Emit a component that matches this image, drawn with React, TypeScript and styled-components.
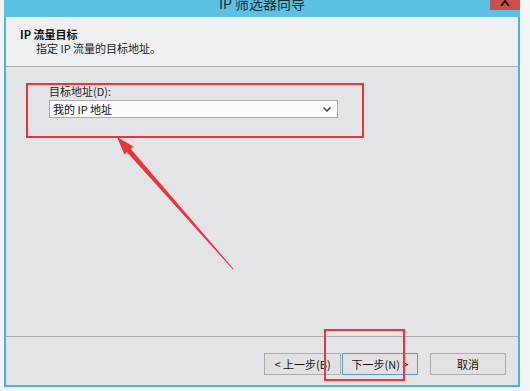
import styled, { createGlobalStyle } from 'styled-components';

const GlobalStyle = createGlobalStyle`
  html, body {
    margin: 0;
    padding: 0;
    background: #f3f4f6;
    font-family: "Noto Sans CJK SC", "Noto Sans", sans-serif;
  }
`;

const Page = styled.div`
  position: relative;
  width: 530px;
  height: 391px;
  overflow: hidden;
  background: #f3f4f6;
`;

const Window = styled.div`
  margin-left: 4px;
  width: 512px;
  height: 385px;
  display: flex;
  flex-direction: column;
  border: 2px solid #48b4e2;
  border-top: none;
  background: #e2e4e7;
`;

const TitleBar = styled.div`
  position: relative;
  height: 17px;
  background: #5bc0e4;
  margin: 0 -2px;
  display: flex;
  justify-content: center;
  align-items: flex-start;
  flex-shrink: 0;
`;

const Title = styled.div`
  font-size: 14px;
  line-height: 14px;
  margin-top: -4px;
  color: #1c2a33;
`;

const CloseButton = styled.div`
  position: absolute;
  right: 0;
  top: 0;
  width: 30px;
  height: 10px;
  background: #c7504a;
  display: flex;
  justify-content: center;
  align-items: flex-start;
`;

const Header = styled.div`
  height: 50px;
  flex-shrink: 0;
  background: #eff0f2;
  border-bottom: 1px solid #a9abae;
  padding: 10px 0 0 14px;
  box-sizing: border-box;
`;

const HeaderTitle = styled.div`
  font-size: 11px;
  line-height: 14px;
  font-weight: bold;
  color: #111;
`;

const HeaderText = styled.div`
  font-size: 11px;
  line-height: 14px;
  color: #222;
  margin: 0 0 0 16px;
`;

const Body = styled.div`
  flex: 1;
  border-bottom: 1px solid #a9abae;
  padding: 17px 0 0 43px;
`;

const FieldLabel = styled.div`
  font-size: 11px;
  line-height: 14px;
  color: #222;
  margin-bottom: 2px;
`;

const Combo = styled.div`
  width: 289px;
  height: 18px;
  box-sizing: border-box;
  background: #fbfbfb;
  border: 1px solid #acacac;
  display: flex;
  align-items: center;
  justify-content: space-between;
  padding: 0 6px 0 3px;
  font-size: 11px;
  color: #111;
`;

const Footer = styled.div`
  height: 48px;
  flex-shrink: 0;
  display: flex;
  justify-content: flex-end;
  align-items: flex-start;
  padding: 16px 12px 0 0;
  box-sizing: border-box;
`;

const Button = styled.div<{ $primary?: boolean; $gap?: number }>`
  width: 77px;
  height: 22px;
  box-sizing: border-box;
  margin-left: ${(p) => p.$gap ?? 0}px;
  background: #e1e1e1;
  border: 1px solid ${(p) => (p.$primary ? '#5a9bcf' : '#adadad')};
  display: flex;
  align-items: center;
  justify-content: center;
  font-size: 11px;
  color: #111;
`;

const RedBox = styled.div<{ $x: number; $y: number; $w: number; $h: number }>`
  position: absolute;
  left: ${(p) => p.$x}px;
  top: ${(p) => p.$y}px;
  width: ${(p) => p.$w}px;
  height: ${(p) => p.$h}px;
  box-sizing: border-box;
  border: 2px solid #ec3338;
`;

const Overlay = styled.svg`
  position: absolute;
  left: 0;
  top: 0;
  pointer-events: none;
`;

export default function App() {
  return (
    <>
      <GlobalStyle />
      <Page>
        <Window>
          <TitleBar>
            <Title>IP 筛选器向导</Title>
            <CloseButton>
              <svg width="10" height="6" viewBox="0 0 10 6">
                <path d="M1 6 L5 1 L9 6" stroke="#1a1a1a" strokeWidth="2" fill="none" />
              </svg>
            </CloseButton>
          </TitleBar>
          <Header>
            <HeaderTitle>IP 流量目标</HeaderTitle>
            <HeaderText>指定 IP 流量的目标地址。</HeaderText>
          </Header>
          <Body>
            <FieldLabel>目标地址(D):</FieldLabel>
            <Combo>
              <span>我的 IP 地址</span>
              <svg width="8" height="5" viewBox="0 0 8 5">
                <path d="M0.5 0.5 L4 4 L7.5 0.5" stroke="#333" strokeWidth="1.3" fill="none" />
              </svg>
            </Combo>
          </Body>
          <Footer>
            <Button>&lt; 上一步(B)</Button>
            <Button $primary $gap={1} style={{ width: 76 }}>下一步(N) &gt;</Button>
            <Button $gap={12} style={{ width: 76 }}>取消</Button>
          </Footer>
        </Window>
        <RedBox $x={26} $y={83} $w={338} $h={55} />
        <RedBox $x={324} $y={329} $w={81} $h={52} />
        <Overlay width="530" height="391" viewBox="0 0 530 391">
          <polygon
            points="117,137 133.4,146.5 130.8,148.9 233.4,268.7 232.6,269.3 127,152.2 124.4,154.5"
            fill="#ec3338"
          />
        </Overlay>
      </Page>
    </>
  );
}
